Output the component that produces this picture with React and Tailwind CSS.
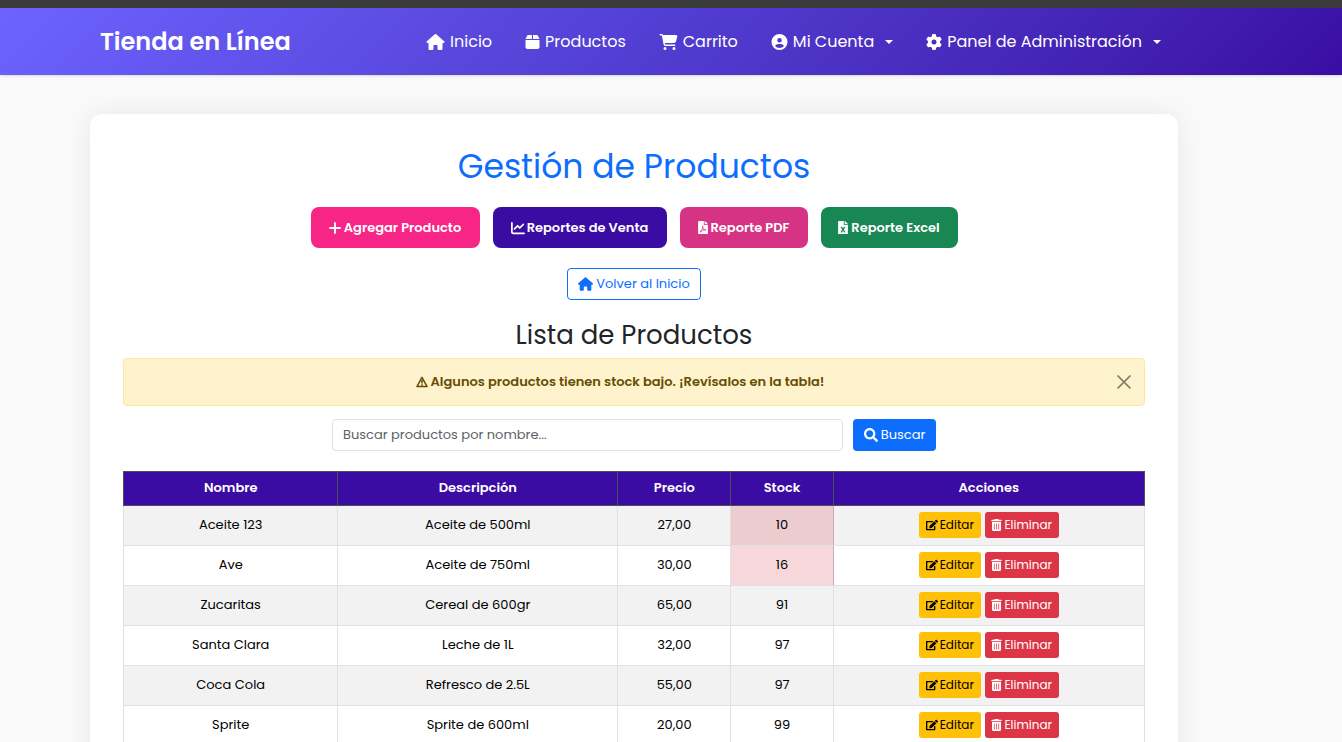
import {
  FaHouse, FaBox, FaCartShopping, FaCircleUser, FaGear,
  FaChartLine, FaTrashCan,
} from "react-icons/fa6";
import { FaFilePdf, FaFileExcel, FaSearch, FaEdit } from "react-icons/fa";

const products = [
  { name: "Aceite 123", description: "Aceite de 500ml", price: "27,00", stock: 10 },
  { name: "Ave", description: "Aceite de 750ml", price: "30,00", stock: 16 },
  { name: "Zucaritas", description: "Cereal de 600gr", price: "65,00", stock: 91 },
  { name: "Santa Clara", description: "Leche de 1L", price: "32,00", stock: 97 },
  { name: "Coca Cola", description: "Refresco de 2.5L", price: "55,00", stock: 97 },
  { name: "Sprite", description: "Sprite de 600ml", price: "20,00", stock: 99 },
];

function Caret() {
  return (
    <svg className="ml-1.5 h-1 w-2" viewBox="0 0 8 4" fill="currentColor" aria-hidden="true">
      <path d="M0 0h8L4 4z" />
    </svg>
  );
}

function PlusIcon() {
  return (
    <svg className="size-3 shrink-0" viewBox="0 0 12 12" stroke="currentColor" strokeWidth="1.9" strokeLinecap="round" aria-hidden="true">
      <path d="M6 1v10M1 6h10" />
    </svg>
  );
}

function WarningIcon() {
  return (
    <svg className="size-3 shrink-0" viewBox="0 0 12 12" fill="none" stroke="currentColor" strokeWidth="1.5" strokeLinejoin="round" aria-hidden="true">
      <path d="M6 1.4 11.1 10.6H.9z" />
      <path d="M6 4v3.4M6 8.3v1.4" />
    </svg>
  );
}

function CloseIcon() {
  return (
    <svg className="size-[14px]" viewBox="0 0 14 14" stroke="currentColor" strokeWidth="1.7" strokeLinecap="round" aria-hidden="true">
      <path d="M1 1l12 12M13 1L1 13" />
    </svg>
  );
}

function NavLink({ icon: Icon, iconClass, label, menu }) {
  return (
    <a href="#" className="flex items-center gap-[5px] whitespace-nowrap">
      <Icon className={`h-4 shrink-0 ${iconClass}`} aria-hidden="true" />
      {label}
      {menu && <Caret />}
    </a>
  );
}

function ReportButton({ icon, label, className }) {
  return (
    <button
      type="button"
      className={`flex h-[41px] items-center justify-center rounded-lg font-semibold whitespace-nowrap text-white ${className}`}
    >
      {icon}
      {label}
    </button>
  );
}

export default function App() {
  return (
    <div className="min-h-screen bg-[#f9f9f9] font-[Poppins,Inter,sans-serif] text-[13px] text-[#212529]">
      <div className="h-2 bg-[#3b3b3b]" />
      <nav className="bg-linear-135 from-[#6c63ff] to-[#3a0ca3] pr-[74px] text-white shadow-sm">
        <div className="mx-auto flex h-[67px] max-w-[1088px] items-center justify-between pr-[17px] pl-2.5">
          <a href="#" className="text-2xl font-semibold whitespace-nowrap">Tienda en Línea</a>
          <div className="flex items-center gap-[33px] text-base">
            <NavLink icon={FaHouse} iconClass="w-[19px]" label="Inicio" />
            <NavLink icon={FaBox} iconClass="w-[15px]" label="Productos" />
            <NavLink icon={FaCartShopping} iconClass="w-[19px]" label="Carrito" />
            <NavLink icon={FaCircleUser} iconClass="w-[17px]" label="Mi Cuenta" menu />
            <NavLink icon={FaGear} iconClass="w-4" label="Panel de Administración" menu />
          </div>
        </div>
      </nav>

      <div className="pt-[39px] pr-[74px]">
        <main className="mx-auto flex max-w-[1088px] flex-col items-center rounded-xl bg-white px-[33px] pt-[33px] pb-8 shadow-[0_0_24px_rgba(0,0,0,0.07)]">
          <h1 className="text-[33px] leading-10 text-[#0d6efd]">Gestión de Productos</h1>
          <div className="mt-5 flex gap-[13px]">
            <ReportButton icon={<PlusIcon />} label="Agregar Producto" className="w-[169px] gap-[3px] bg-[#f72585]" />
            <ReportButton icon={<FaChartLine className="size-[14px]" aria-hidden="true" />} label="Reportes de Venta" className="w-[174px] gap-0.5 bg-[#3a0ca3]" />
            <ReportButton icon={<FaFilePdf className="h-[13px] w-2.5" aria-hidden="true" />} label="Reporte PDF" className="w-[128px] gap-[3px] bg-[#d63384]" />
            <ReportButton icon={<FaFileExcel className="h-[13px] w-2.5" aria-hidden="true" />} label="Reporte Excel" className="w-[137px] gap-[3px] bg-[#198754]" />
          </div>
          <a href="#" className="mt-5 flex h-8 w-[134px] items-center justify-center gap-[3px] rounded border border-[#0d6efd] whitespace-nowrap text-[#0d6efd]">
            <FaHouse className="h-[14px] w-[15px] shrink-0" aria-hidden="true" />
            Volver al Inicio
          </a>
          <h2 className="mt-[19px] text-[26px] leading-8">Lista de Productos</h2>
          <div role="alert" className="mt-[7px] flex h-12 w-full items-center rounded border border-[#ffe69c] bg-[#fff3cd] px-3 text-[#664d03]">
            <p className="flex flex-1 items-center justify-center gap-[3px] pr-3 font-semibold">
              <WarningIcon />
              Algunos productos tienen stock bajo. ¡Revísalos en la tabla!
            </p>
            <button type="button" aria-label="Cerrar" className="p-px text-black/50">
              <CloseIcon />
            </button>
          </div>
          <form className="mt-[13px] flex w-full justify-center gap-2.5">
            <input
              type="text"
              aria-label="Buscar productos por nombre"
              placeholder="Buscar productos por nombre..."
              className="h-8 w-1/2 rounded border border-[#dee2e6] px-2.5 placeholder:text-[#5b6167]"
            />
            <button type="button" className="flex h-8 w-[83px] items-center justify-center gap-[3px] rounded bg-[#0d6efd] text-white">
              <FaSearch className="size-[14px]" aria-hidden="true" />
              Buscar
            </button>
          </form>
          <table className="mt-5 w-full table-fixed border-collapse text-center text-black">
            <colgroup>
              <col className="w-[21%]" />
              <col className="w-[27.4%]" />
              <col className="w-[11.1%]" />
              <col className="w-[10%]" />
              <col />
            </colgroup>
            <thead>
              <tr className="h-[34px] bg-[#3a0ca3] text-white">
                {["Nombre", "Descripción", "Precio", "Stock", "Acciones"].map((title) => (
                  <th key={title} scope="col" className="border border-[#4d5154] pb-0.5 font-semibold">{title}</th>
                ))}
              </tr>
            </thead>
            <tbody>
              {products.map((p) => (
                <tr key={p.name} className="h-10 odd:bg-[#f2f2f2]">
                  <td className="border border-[#dee2e6] pb-0.5">{p.name}</td>
                  <td className="border border-[#dee2e6] pb-0.5">{p.description}</td>
                  <td className="border border-[#dee2e6] pb-0.5">{p.price}</td>
                  <td className={p.stock < 20 ? "border border-[#dee2e6] border-r-[#c6aeb0] bg-[#dc3545]/20 pb-0.5" : "border border-[#dee2e6] pb-0.5"}>{p.stock}</td>
                  <td className="border border-[#dee2e6] pb-0.5">
                    <div className="flex justify-center gap-1 text-xs">
                      <button type="button" className="flex h-[26px] w-[62px] items-center justify-center gap-0.5 rounded-[3px] bg-[#ffc107] text-black">
                        <FaEdit className="size-3" aria-hidden="true" />
                        Editar
                      </button>
                      <button type="button" className="flex h-[26px] w-[74px] items-center justify-center gap-0.5 rounded-[3px] bg-[#dc3545] text-white">
                        <FaTrashCan className="h-3 w-[11px]" aria-hidden="true" />
                        Eliminar
                      </button>
                    </div>
                  </td>
                </tr>
              ))}
            </tbody>
          </table>
        </main>
      </div>
    </div>
  );
}
